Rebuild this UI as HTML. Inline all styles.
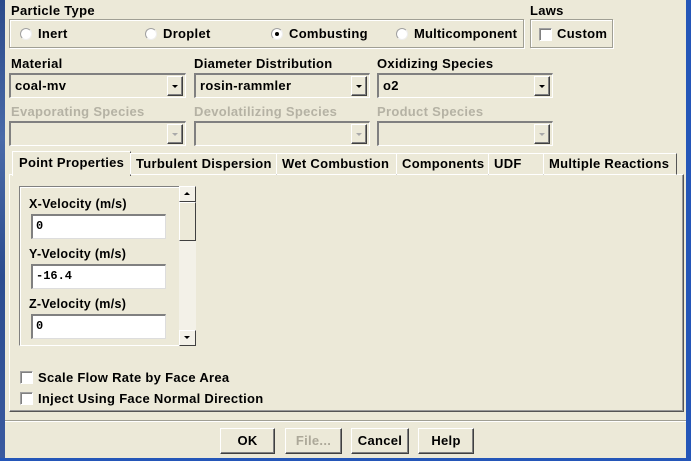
<!DOCTYPE html>
<html><head><style>
*{box-sizing:border-box;margin:0;padding:0}
body{width:691px;height:461px;background:#ECE9D8;position:relative;overflow:hidden;font-family:"Liberation Sans",Arial,sans-serif;font-weight:bold;font-size:13px;letter-spacing:0.3px;color:#000}
.a{position:absolute;white-space:nowrap}
.grp{position:absolute;border:1px solid #a09f94;box-shadow:inset 1px 1px 0 #fff,1px 1px 0 #fff}
.combo{position:absolute;height:25px;background:#ECE9D8;border-top:2px solid #808080;border-left:2px solid #808080;border-right:1px solid #fff;border-bottom:1px solid #fff}
.combo span{position:absolute;left:4px;top:3px}
.cb{position:absolute;right:2px;top:1px;width:16px;height:20px;background:#ECE9D8;border:1px solid;border-color:#fff #404040 #404040 #fff;box-shadow:inset -1px -1px 0 #808080}
.cb:after{content:"";position:absolute;left:4px;top:8px;border-left:3px solid transparent;border-right:3px solid transparent;border-top:3px solid #000}
.dis .cb:after{border-top-color:#aaa}
.dis{color:#b5b2a4}
.radio{position:absolute;width:12px;height:12px;border-radius:50%;background:#fff;border:1px solid #a0a0a0;border-right-color:#eee;border-bottom-color:#eee}
.chk{position:absolute;width:13px;height:13px;background:#fff;border:1px solid;border-color:#a0a0a0 #fff #fff #a0a0a0;box-shadow:inset 1px 1px 0 #808080}
.inp{position:absolute;height:25px;background:#fff;border-top:2px solid #808080;border-left:2px solid #808080;border-right:1px solid #ddd;border-bottom:1px solid #ddd;font-family:"Liberation Mono",monospace;font-size:12px;letter-spacing:0;padding:3px 0 0 3px}
.tab{position:absolute;top:153px;height:22px;border:1px solid;border-color:#fff #555 transparent #fff;padding:2px 0 0 5px;white-space:nowrap;overflow:hidden}
.btn{position:absolute;top:428px;height:26px;border:1px solid;border-color:#fff #404040 #404040 #fff;box-shadow:inset -1px -1px 0 #808080;text-align:center;line-height:24px}
</style></head><body>
<div class="a" style="left:0;top:0;width:5px;height:461px;background:linear-gradient(#2a4a8a,#4a6aa8 30%,#2b4c90 60%,#3a5aa0)"></div>
<div class="a" style="left:686px;top:0;width:5px;height:461px;background:#2456b8"></div>
<div class="a" style="left:0;top:458px;width:691px;height:3px;background:#2456b8"></div>

<div class="a" style="left:11px;top:3px">Particle Type</div>
<div class="grp" style="left:9px;top:19px;width:515px;height:29px"></div>
<div class="radio" style="left:20px;top:28px"></div><div class="a" style="left:38px;top:26px">Inert</div>
<div class="radio" style="left:145px;top:28px"></div><div class="a" style="left:163px;top:26px">Droplet</div>
<div class="radio" style="left:271px;top:28px"><div style="position:absolute;left:3px;top:3px;width:4px;height:4px;background:#000;border-radius:50%"></div></div><div class="a" style="left:289px;top:26px">Combusting</div>
<div class="radio" style="left:396px;top:28px"></div><div class="a" style="left:414px;top:26px;letter-spacing:0.2px">Multicomponent</div>
<div class="a" style="left:530px;top:3px">Laws</div>
<div class="grp" style="left:530px;top:19px;width:83px;height:29px"></div>
<div class="chk" style="left:539px;top:28px"></div><div class="a" style="left:557px;top:26px">Custom</div>

<div class="a" style="left:11px;top:56px">Material</div>
<div class="a" style="left:194px;top:56px">Diameter Distribution</div>
<div class="a" style="left:377px;top:56px">Oxidizing Species</div>
<div class="combo" style="left:9px;top:73px;width:177px"><span>coal-mv</span><div class="cb"></div></div>
<div class="combo" style="left:194px;top:73px;width:176px"><span>rosin-rammler</span><div class="cb"></div></div>
<div class="combo" style="left:377px;top:73px;width:176px"><span>o2</span><div class="cb"></div></div>

<div class="a dis" style="left:11px;top:104px">Evaporating Species</div>
<div class="a dis" style="left:194px;top:104px">Devolatilizing Species</div>
<div class="a dis" style="left:377px;top:104px">Product Species</div>
<div class="combo dis" style="left:9px;top:121px;width:177px"><div class="cb"></div></div>
<div class="combo dis" style="left:194px;top:121px;width:176px"><div class="cb"></div></div>
<div class="combo dis" style="left:377px;top:121px;width:176px"><div class="cb"></div></div>

<div class="a" style="left:9px;top:174px;width:675px;height:238px;border:1px solid;border-color:#fff #555 #555 #fff;box-shadow:inset -1px -1px 0 #999"></div>
<div class="tab" style="left:12px;top:151px;height:25px;width:119px;background:#ECE9D8;border-bottom:none;padding-top:3px;padding-left:6px">Point Properties</div>
<div class="tab" style="left:130px;width:147px">Turbulent Dispersion</div>
<div class="tab" style="left:276px;width:121px">Wet Combustion</div>
<div class="tab" style="left:396px;width:93px">Components</div>
<div class="tab" style="left:488px;width:56px">UDF</div>
<div class="tab" style="left:543px;width:134px">Multiple Reactions</div>

<div class="a" style="left:19px;top:186px;width:161px;height:160px;border:1px solid;border-color:#808080 #fff #fff #808080;box-shadow:inset 1px 1px 0 #fff"></div>
<div class="a" style="left:179px;top:186px;width:17px;height:160px;background:#f3f1e8"></div>
<div class="a" style="left:179px;top:186px;width:17px;height:16px;border:1px solid;border-color:#fff #404040 #404040 #fff"><div style="position:absolute;left:4px;top:5px;border-left:3px solid transparent;border-right:3px solid transparent;border-bottom:3px solid #000"></div></div>
<div class="a" style="left:179px;top:202px;width:17px;height:39px;border:1px solid;border-color:#fff #404040 #404040 #fff;background:#ECE9D8"></div>
<div class="a" style="left:179px;top:330px;width:17px;height:16px;border:1px solid;border-color:#fff #404040 #404040 #fff"><div style="position:absolute;left:4px;top:5px;border-left:3px solid transparent;border-right:3px solid transparent;border-top:3px solid #000"></div></div>
<div class="a" style="left:29px;top:197px;font-size:12.5px">X-Velocity (m/s)</div>
<div class="inp" style="left:31px;top:214px;width:135px">0</div>
<div class="a" style="left:29px;top:247px;font-size:12.5px">Y-Velocity (m/s)</div>
<div class="inp" style="left:31px;top:264px;width:135px">-16.4</div>
<div class="a" style="left:29px;top:297px;font-size:12.5px">Z-Velocity (m/s)</div>
<div class="inp" style="left:31px;top:314px;width:135px">0</div>

<div class="chk" style="left:20px;top:371px"></div><div class="a" style="left:38px;top:370px">Scale Flow Rate by Face Area</div>
<div class="chk" style="left:20px;top:392px"></div><div class="a" style="left:38px;top:391px">Inject Using Face Normal Direction</div>

<div class="a" style="left:5px;top:420px;width:681px;height:2px;border-top:1px solid #a09f94;border-bottom:1px solid #fff"></div>
<div class="btn" style="left:220px;width:55px">OK</div>
<div class="btn" style="left:285px;width:57px;color:#aca899">File...</div>
<div class="btn" style="left:351px;width:58px">Cancel</div>
<div class="btn" style="left:418px;width:56px">Help</div>
</body></html>
